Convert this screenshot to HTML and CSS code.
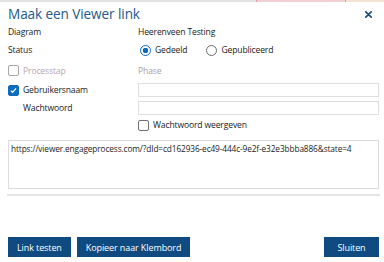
FILE: index.html
```html
<!DOCTYPE html>
<html>
<head>
<meta charset="utf-8">
<link rel="stylesheet" href="styles.css">
</head>
<body>
<div class="topstrip"><span class="seg grey"></span><span class="seg pink"></span><span class="seg peach"></span></div>
<div class="dialog">
  <header class="head">
    <h1 class="title">Maak een Viewer link</h1>
    <button class="close" aria-label="Sluiten"><svg width="7" height="7" viewBox="0 0 7 7"><path d="M0.8 0.8 L6.2 6.2 M6.2 0.8 L0.8 6.2" stroke="#1f4e79" stroke-width="1.7" stroke-linecap="round"/></svg></button>
  </header>
  <div class="form">
    <div class="label">Diagram</div>
    <div class="value">Heerenveen Testing</div>

    <div class="label">Status</div>
    <div class="value radios">
      <label class="opt"><input type="radio" name="st" class="radio" checked> Gedeeld</label>
      <label class="opt"><input type="radio" name="st" class="radio"> Gepubliceerd</label>
    </div>

    <label class="label opt muted"><input type="checkbox" class="check disabled" disabled> Processtap</label>
    <div class="value muted2">Phase</div>

    <label class="label opt"><input type="checkbox" class="check" checked> Gebruikersnaam</label>
    <div class="value"><input type="text" class="field"></div>

    <div class="label indent">Wachtwoord</div>
    <div class="value"><input type="password" class="field"></div>

    <div class="label"></div>
    <label class="value opt"><input type="checkbox" class="check"> Wachtwoord weergeven</label>
  </div>
  <div class="linkbox">https://viewer.engageprocess.com/?dId=cd162936-ec49-444c-9e2f-e32e3bbba886&amp;state=4</div>
  <div class="sep"></div>
  <footer class="actions">
    <button class="btn">Link testen</button>
    <button class="btn">Kopieer naar Klembord</button>
    <span class="spacer"></span>
    <button class="btn">Sluiten</button>
  </footer>
</div>
</body>
</html>
```
FILE: styles.css
```css
* { box-sizing: border-box; }
body {
  margin: 0;
  background: #fff;
  font-family: "Open Sans", "Noto Sans", sans-serif;
  font-size: 8.6px;
  letter-spacing: -0.15px;
  color: #222;
  width: 384px;
  height: 262px;
  overflow: hidden;
}
.topstrip { display: flex; height: 2px; }
.seg { display: block; height: 2px; }
.seg.grey { width: 256px; background: #e2e2e2; }
.seg.pink { width: 90px; background: #f0d0d3; border-left: 1px solid #e39aa0; border-right: 1px solid #e39aa0; }
.seg.peach { flex: 1; background: #f3e3d2; }

.dialog { padding: 0 5px 0 8px; }
.head {
  display: flex;
  align-items: center;
  justify-content: space-between;
  height: 24px;
}
.title {
  margin: 0;
  font-size: 13.6px;
  font-weight: 400;
  letter-spacing: -0.1px;
  color: #245a8c;
  line-height: 24px;
}
.close {
  border: 0;
  background: none;
  padding: 0;
  margin-right: 7px;
  width: 7px;
  height: 7px;
  display: flex;
}
.form {
  display: grid;
  grid-template-columns: 130px 1fr;
  grid-template-rows: 12px 16px 17px 14px 14px 12px;
  row-gap: 4px;
  align-items: center;
}
.label, .value { display: flex; align-items: center; height: 100%; white-space: nowrap; }
.indent { padding-left: 15px; }
.muted { color: #b9a4ae; }
.muted2 { color: #aa9ea7; }
.radios { gap: 17px; }
.opt { display: flex; align-items: center; gap: 4px; }
.radio {
  appearance: none;
  margin: 0 0 0 2px;
  width: 11px; height: 11px;
  border: 1px solid #6d6d6d;
  border-radius: 50%;
  background: #fff;
}
.radio:checked {
  border-color: #0f6cbd;
  background: radial-gradient(circle, #0f6cbd 0 2.6px, #fff 3px);
}
.check {
  appearance: none;
  margin: 0;
  width: 11px; height: 11px;
  border: 1px solid #707070;
  border-radius: 2px;
  background: #fff;
}
.check.disabled { border-color: #a7a7a7; }
.check:checked {
  border-color: #0f6cbd;
  background: #0f6cbd url("data:image/svg+xml,%3Csvg xmlns='http://www.w3.org/2000/svg' viewBox='0 0 11 11'%3E%3Cpath d='M2.3 5.6 L4.4 7.7 L8.6 3' fill='none' stroke='white' stroke-width='1.5'/%3E%3C/svg%3E") center/100% no-repeat;
}
.field {
  width: 100%;
  height: 14px;
  border: 1px solid #dedede;
  margin: 0;
  padding: 0 3px;
  background: #fff;
}
.linkbox {
  margin-top: 9px;
  height: 49px;
  border: 1px solid #dcdcdc;
  padding: 2px 2px;
  font-size: 8.3px;
  letter-spacing: -0.12px;
  line-height: 12px;
  white-space: nowrap;
  overflow: hidden;
}
.sep {
  margin: 5px 0 0 -1px;
  width: 373px;
  height: 2px;
  background: #e5e5e5;
}
.actions {
  margin-top: 41px;
  display: flex;
  gap: 6px;
}
.spacer { flex: 1; }
.btn {
  height: 20px;
  min-width: 55px;
  border: 0;
  background: #0f4a80;
  color: #fff;
  font-family: inherit;
  font-size: 9px;
  letter-spacing: -0.1px;
  padding: 0 9px;
}
```
